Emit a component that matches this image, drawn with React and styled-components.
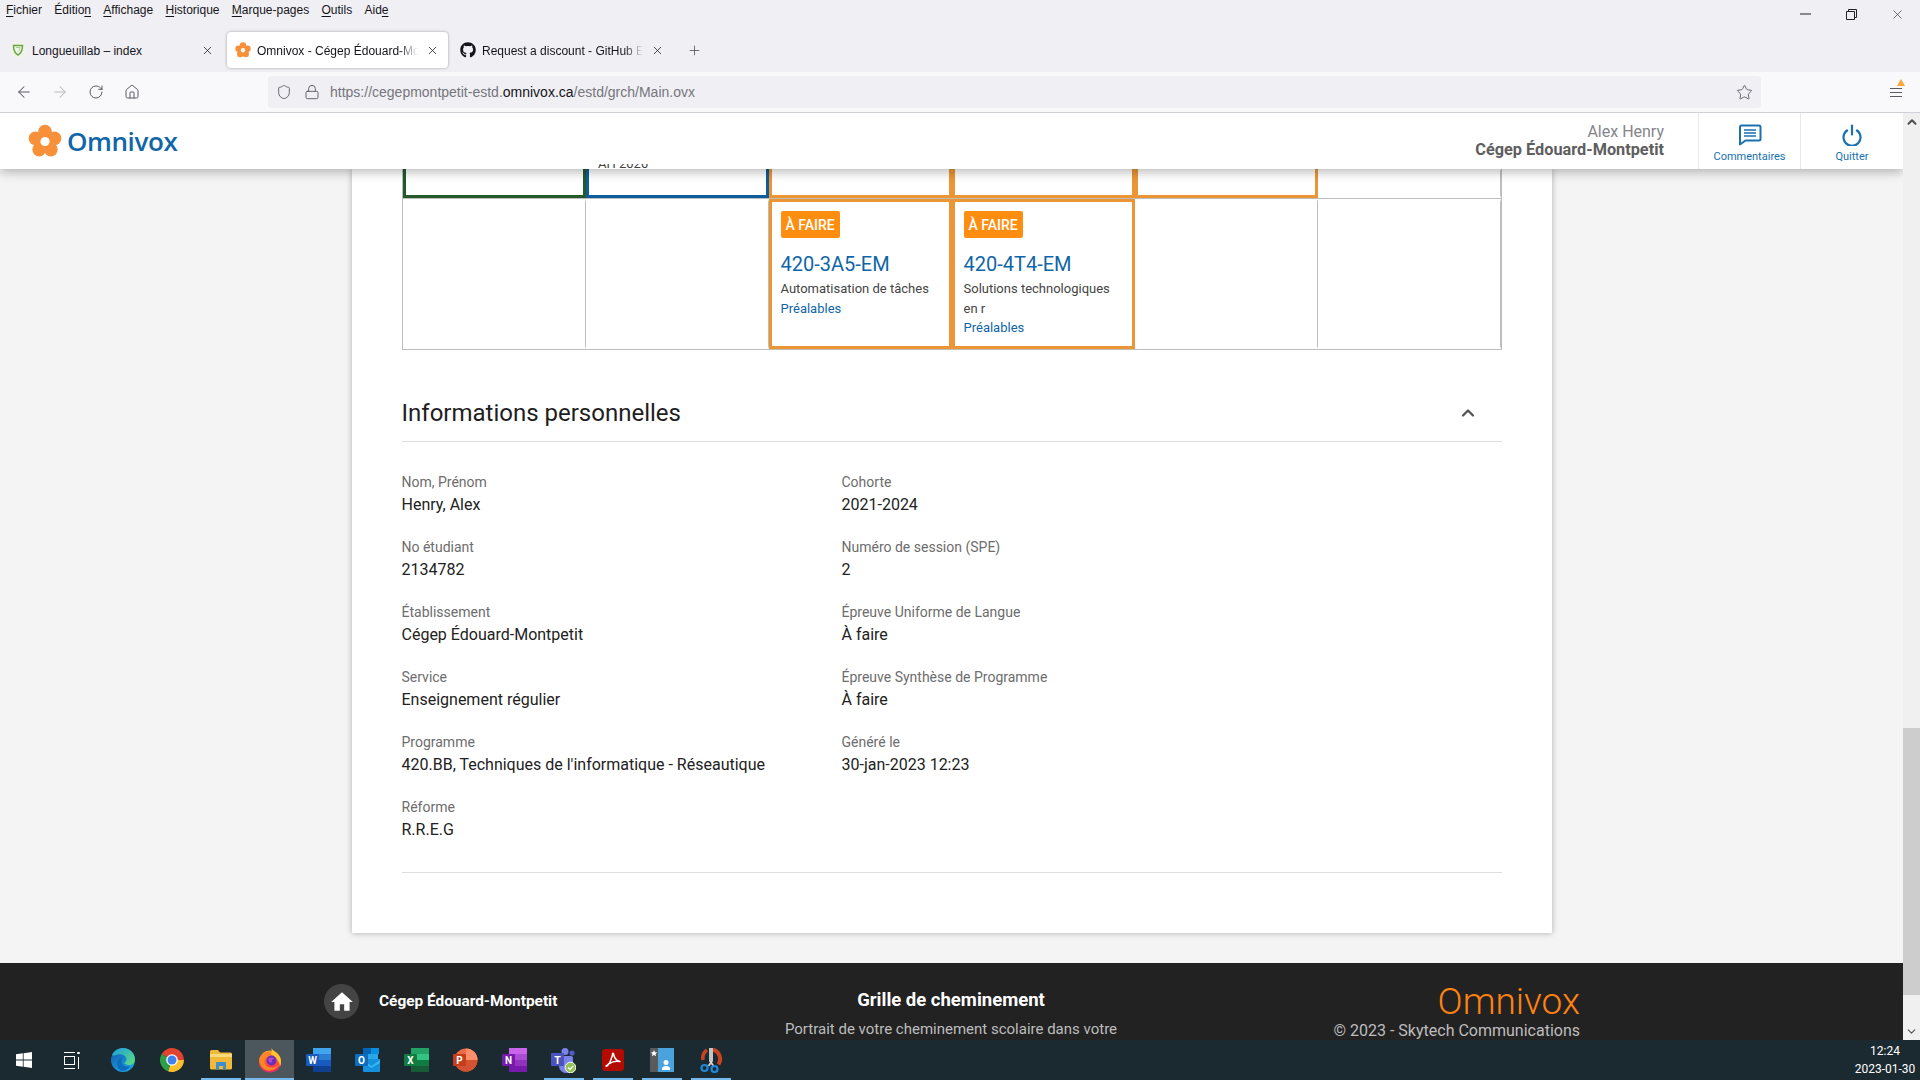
import React from "react";
import styled, { createGlobalStyle } from "styled-components";
import { ArrowLeft, ArrowRight, RotateCw, Home, Shield, Lock, Star, X, Plus, ChevronUp, ChevronDown } from "lucide-react";
import { FaGithub } from "react-icons/fa";

const Global = createGlobalStyle`
  html, body { margin: 0; padding: 0; height: 100%; background: #f4f4f4; }
  * { box-sizing: border-box; }
  body { font-family: Roboto, "Liberation Sans", sans-serif; }
`;

const Screen = styled.div`display: flex; flex-direction: column; width: 1920px; height: 1080px; overflow: hidden; position: relative;`;

/* browser chrome */
const TitleBar = styled.div`display: flex; justify-content: space-between; height: 32px; background: #f0f0f4; font: 12px/20px "Liberation Sans", sans-serif; color: #15141a;`;
const Menu = styled.nav`display: flex; gap: 12.3px; padding-left: 6px;`;
const MenuItem = styled.span`
  u { text-decoration-thickness: 1px; text-underline-offset: 2px; }
`;
const WindowControls = styled.div`display: flex; height: 28px;`;
const WinButton = styled.span`display: flex; align-items: center; justify-content: center; width: 46px; color: #222;`;

const TabStrip = styled.div`display: flex; height: 40px; background: #f0f0f4; padding-left: 2px; gap: 4px; align-items: flex-start;`;
const Tab = styled.div`
  display: flex; align-items: center; width: 221px; height: 36px; padding: 0 8px; gap: 6px;
  background: ${p => (p.$active ? "#fff" : "transparent")};
  border-radius: 4px;
  box-shadow: ${p => (p.$active ? "0 0 3px rgba(0,0,0,.35)" : "none")};
  font: 12px "Liberation Sans", sans-serif; color: #15141a;
`;
const TabIcon = styled.span`display: flex; width: 16px; height: 16px; flex: none;`;
const TabLabel = styled.span`
  flex: 1; min-width: 0; padding-top: 1px; white-space: nowrap; overflow: hidden;
  -webkit-mask-image: ${p => (p.$fade ? "linear-gradient(90deg,#000 88%,transparent)" : "none")};
  mask-image: ${p => (p.$fade ? "linear-gradient(90deg,#000 88%,transparent)" : "none")};
`;
const TabClose = styled.span`display: flex; width: 16px; justify-content: center; color: #15141a; flex: none;`;
const NewTab = styled.span`display: flex; align-items: center; justify-content: center; width: 34px; height: 36px; color: #555;`;

const Toolbar = styled.div`display: flex; align-items: center; height: 41px; padding: 0 6px; background: #f9f9fb; border-bottom: 1px solid #cfcfd8;`;
const NavButton = styled.span`display: flex; align-items: center; justify-content: center; width: 36px; height: 32px; color: ${p => (p.$off ? "#b9b9bd" : "#5b5b66")};`;
const UrlBar = styled.div`display: flex; align-items: center; width: 1493px; height: 32px; margin-left: 118px; padding: 0 8px; gap: 12px; border-radius: 4px; background: #f0f0f4; color: #5b5b66;`;
const UrlText = styled.span`flex: 1; margin-left: -2px; font: 14px "Liberation Sans", sans-serif; color: #75757c; b { font-weight: 400; color: #15141a; }`;
const Hamburger = styled.span`position: relative; display: flex; flex-direction: column; gap: 3px; width: 12px; margin-left: auto; margin-right: 12px; span { height: 1px; background: #5b5b66; }`;
const Notice = styled.i`position: absolute; top: -9px; right: -3px; width: 0; height: 0; border-left: 4px solid transparent; border-right: 4px solid transparent; border-bottom: 7px solid #ffa436;`;

/* page */
const Viewport = styled.div`flex: 1; display: flex; min-height: 0;`;
const PageArea = styled.div`flex: 1; min-width: 0; display: flex; flex-direction: column; background: #f4f4f4; overflow: hidden;`;
const PageHeader = styled.header`position: relative; z-index: 2; flex: none; display: flex; align-items: stretch; height: 56px; background: #fff; box-shadow: 0 3px 10px rgba(0,0,0,.28);`;
const Brand = styled.div`display: flex; align-items: center; gap: 5px; padding-left: 28px; margin-right: auto; font: 600 26px "Open Sans", sans-serif; letter-spacing: -.4px; color: #0f66a8;`;
const ClippedNote = styled.div`position: absolute; left: 598px; bottom: 0; height: 5px; overflow: hidden; display: flex; align-items: flex-end; font: 13px/14px Roboto, sans-serif; color: #444; span { margin-bottom: -2px; }`;
const UserBlock = styled.div`display: flex; flex-direction: column; justify-content: center; align-items: flex-end; padding: 0 34px 0 0; font-size: 16px; line-height: 18px; color: #85858a; strong { color: #5e5e60; font-weight: 700; font-size: 16.3px; }`;
const HeaderAction = styled.div`display: flex; flex-direction: column; align-items: center; justify-content: flex-start; padding-top: 11px; width: ${p => p.$w}px; border-left: 1px solid #e9e9e9; font-size: 11px; line-height: 13px; color: #1a70b0; svg { margin-bottom: 4px; }`;

const Card = styled.main`flex: none; width: 1200px; margin: 0 auto; padding: 0 50px 60px; background: #fff; box-shadow: 0 0 6px rgba(0,0,0,.3);`;
const Table = styled.div`display: flex; flex-direction: column; border: 1px solid #bdbdbd; border-top: 0;`;
const TableRow = styled.div`display: grid; grid-template-columns: repeat(6, 1fr); height: ${p => p.$h}px; border-bottom: ${p => (p.$line ? "1px solid #bdbdbd" : "0")};`;
const colours = { green: "#25592c", blue: "#0d5c9c", orange: "#eb9535" };
const Cell = styled.div`
  min-width: 0;
  border: 3px solid ${p => colours[p.$tone] || "transparent"};
  border-top-width: ${p => (p.$open ? 0 : 3)}px;
  border-right-color: ${p => colours[p.$tone] || "#bdbdbd"};
  border-right-width: ${p => (p.$tone ? 3 : 1)}px;
  padding: 9px 9px 0;
`;
const Badge = styled.span`display: inline-flex; align-items: center; height: 27px; padding: 0 5px; border-radius: 2px; background: #ff8d10; color: #fff; font-size: 14px; font-weight: 500;`;
const CourseCode = styled.div`margin-top: 12.500px; font-size: 20px; line-height: 26px; color: #0f66a8;`;
const CourseName = styled.div`margin-top: 2.500px; font-size: 13px; line-height: 19.500px; color: #444;`;
const CourseLink = styled.div`font-size: 13px; line-height: 20px; color: #0f66a8;`;

const SectionHead = styled.div`display: flex; align-items: center; justify-content: space-between; height: 48px; margin-top: 44px; padding: 0 24px 9.5px 0; border-bottom: 1px solid #dedede; font-size: 24px; color: #1e1e1e; svg { color: #555; }`;
const InfoGrid = styled.div`display: grid; grid-template-columns: 440px 1fr; padding: 30px 0; border-bottom: 1px solid #dedede;`;
const InfoCol = styled.div`display: flex; flex-direction: column; gap: 20px;`;
const InfoItem = styled.div`display: flex; flex-direction: column;`;
const InfoLabel = styled.span`font-size: 14px; line-height: 21px; color: #6d6d6d;`;
const InfoValue = styled.span`font-size: 16px; line-height: 24px; color: #222;`;

const Footer = styled.footer`flex: 1; display: grid; grid-template-columns: 427px 400px 429px; padding-left: 324px; margin-top: 30px; background: #222; color: #fff; overflow: hidden;`;
const FootLeft = styled.div`display: flex; align-items: flex-start; gap: 20px; padding-top: 21px;`;
const HomeDisc = styled.span`display: flex; align-items: center; justify-content: center; width: 35px; height: 35px; border-radius: 50%; background: #444;`;
const FootName = styled.span`line-height: 35px; font-size: 15.4px; font-weight: 700;`;
const FootCenter = styled.div`padding-top: 25px; text-align: center; display: flex; flex-direction: column; gap: 7px;`;
const FootTitle = styled.div`font-size: 18.5px; line-height: 24px; font-weight: 700;`;
const FootText = styled.div`font-size: 15px; line-height: 20px; color: #bdbdbd;`;
const FootRight = styled.div`padding-top: 19px; text-align: right;`;
const FootLogo = styled.div`font-size: 37px; line-height: 39px; font-weight: 300; color: #ff8212;`;
const FootCopy = styled.div`font-size: 16px; line-height: 20px; color: #bdbdbd;`;

const Scrollbar = styled.aside`flex: none; width: 17px; display: flex; flex-direction: column; background: #f0f0f0;`;
const ScrollBtn = styled.span`flex: none; display: flex; align-items: center; justify-content: center; height: 17px; color: #505050;`;
const ScrollTrack = styled.div`flex: 1; padding-top: 598px;`;
const ScrollThumb = styled.div`height: 267px; background: #cdcdcd;`;

/* taskbar */
const Taskbar = styled.div`flex: none; display: flex; align-items: stretch; height: 40px; background: #1b2a30; color: #fff;`;
const Slot = styled.div`
  position: relative; display: flex; align-items: center; justify-content: center;
  width: ${p => p.$w || 49}px; margin-left: ${p => p.$gap || 0}px;
  background: ${p => (p.$active ? "#4b575c" : "transparent")};
  &::after {
    content: ""; display: ${p => (p.$open ? "block" : "none")};
    position: absolute; bottom: 0; height: 2px; left: ${p => (p.$active ? 0 : 4.5)}px; right: ${p => (p.$active ? 0 : 4.5)}px;
    background: #76b9ed;
  }
`;
const Clock = styled.div`margin-left: auto; display: flex; flex-direction: column; align-items: center; justify-content: center; width: 70px; gap: 5px; font: 12px/13px Roboto, sans-serif;`;

/* icons */
const Flower = ({ size = 34, colour = "#f8903a" }) => {
  const petals = [0, 72, 144, 216, 288].map(a => {
    const r = (a - 90) * Math.PI / 180;
    return [17 + 10 * Math.cos(r), 17.5 + 10 * Math.sin(r)];
  });
  return (
    <svg width={size} height={size} viewBox="0 0 34 34">
      {petals.map(([x, y], i) => <circle key={i} cx={x} cy={y} r="6.8" fill={colour} />)}
      <circle cx="17" cy="17.5" r="7" fill={colour} />
      <circle cx="17" cy="17.5" r="4.6" fill="#fff" />
    </svg>
  );
};
const TabShield = () => (
  <svg width="16" height="16" viewBox="0 0 16 16">
    <circle cx="8" cy="8" r="8" fill="#eef5e6" />
    <path d="M3.5 3.5h9c0 4-.8 7.5-4.5 9.5C4.300 11 3.500 7.500 3.500 3.500z" fill="none" stroke="#6ba34a" strokeWidth="1.500" />
    <path d="M6 5.500h4l-1 3.500" fill="none" stroke="#a9cf8e" strokeWidth="1" />
  </svg>
);
const Bubble = () => (
  <svg width="24" height="22" viewBox="0 0 24 22" fill="none" stroke="#1a70b0" strokeWidth="2">
    <path d="M3 1.500h18a1.500 1.500 0 0 1 1.500 1.500v12a1.500 1.500 0 0 1-1.500 1.500H7.500L2 20.500V3A1.500 1.500 0 0 1 3 1.500z" strokeLinejoin="round" />
    <path d="M6 6h12M6 9h12M6 12h12" strokeWidth="1.600" />
  </svg>
);
const PowerIcon = () => (
  <svg width="22" height="22" viewBox="0 0 22 22" fill="none" stroke="#1a70b0" strokeWidth="2.200" strokeLinecap="round">
    <path d="M6 6.500a8.500 8.500 0 1 0 10 0" />
    <path d="M11 1.500v9" />
  </svg>
);
const MaxIcon = () => (
  <svg width="11" height="11" viewBox="0 0 11 11" fill="none" stroke="#222">
    <path d="M.5 2.500h8v8h-8zM2.500 2.500v-2h8v8h-2" />
  </svg>
);
const HouseIcon = () => (
  <svg width="26" height="26" viewBox="0 0 24 24" fill="#fff">
    <path d="M10 20v-6h4v6h5v-8h3L12 3 2 12h3v8z" />
  </svg>
);
const WinLogo = () => (
  <svg width="16" height="16" viewBox="0 0 16 16" fill="#fff">
    <path d="M0 2.300 6.800 1.300v6.300H0zM7.600 1.200 16 0v7.600H7.600zM0 8.400h6.800v6.300L0 13.700zM7.600 8.400H16V16l-8.400-1.200z" />
  </svg>
);
const TaskView = () => (
  <svg width="17" height="17" viewBox="0 0 17 17" fill="none" stroke="#fff">
    <path d="M1 .5h11M1 16.500h11" />
    <rect x="1.500" y="4.500" width="10" height="8" />
    <path d="M15.500 0v2" strokeWidth="2.500" />
    <path d="M15.500 5v12" />
  </svg>
);
const Edge = () => (
  <svg width="24" height="24" viewBox="0 0 24 24">
    <defs>
      <linearGradient id="eb" x1="0" y1="0" x2="0.6" y2="1"><stop offset="0" stopColor="#0c59a4" /><stop offset="1" stopColor="#1fa0e4" /></linearGradient>
      <linearGradient id="eg" x1="0" y1="0" x2="1" y2="1"><stop offset="0" stopColor="#1b9de2" /><stop offset="1" stopColor="#5fe07a" /></linearGradient>
    </defs>
    <circle cx="12" cy="12" r="12" fill="url(#eb)" />
    <path d="M1 7C3 2.500 7.500 0 12 0c7 0 12 5.500 12 11.500 0 3.500-3 5.500-6 5.500-2 0-4-.8-5-2 2-1 3-2.800 2.500-4.500C14.500 7 10 5.500 6.500 6.500 4 7.200 2 8 1 7z" fill="url(#eg)" />
    <path d="M9 22c-3-2-3.500-6-2.500-9 1-2.200 3.500-3.500 5.500-3-1.800 2-2.500 5 0 7 1.800 1.500 5 2 7.500 1-2 3-6 6.500-10.500 4z" fill="#0f6cbd" />
  </svg>
);
const wedge = (a, b, r = 12) => {
  const p = d => { const t = (d - 90) * Math.PI / 180; return `${12 + r * Math.cos(t)} ${12 + r * Math.sin(t)}`; };
  return `M12 12L${p(a)}A${r} ${r} 0 ${b - a > 180 ? 1 : 0} 1 ${p(b)}Z`;
};
const Chrome = () => (
  <svg width="24" height="24" viewBox="0 0 24 24">
    <path d={wedge(-60, 90)} fill="#e2432f" />
    <path d={wedge(90, 200)} fill="#fbc02d" />
    <path d={wedge(200, 300)} fill="#2f9e48" />
    <circle cx="12" cy="12" r="5.800" fill="#fff" />
    <circle cx="12" cy="12" r="4.500" fill="#3f82ef" />
  </svg>
);
const Folder = () => (
  <svg width="22" height="20" viewBox="0 0 22 20">
    <path d="M0 1.500A1.500 1.500 0 0 1 1.500 0H8l2 2.500h10.500A1.500 1.500 0 0 1 22 4v14a1.500 1.500 0 0 1-1.500 1.500h-19A1.500 1.500 0 0 1 0 18z" fill="#f0b93a" />
    <path d="M0 4h22v3H0z" fill="#f8da7c" />
    <path d="M7 12h8a1 1 0 0 1 1 1v6.500h-3V16H9v3.500H6V13a1 1 0 0 1 1-1z" fill="#3f8fcf" />
  </svg>
);
const Firefox = () => (
  <svg width="24" height="26" viewBox="0 0 24 26">
    <defs>
      <linearGradient id="ff" x1="0.5" y1="0" x2="0.5" y2="1"><stop offset="0" stopColor="#ff9a2a" /><stop offset=".6" stopColor="#ff4a3a" /><stop offset="1" stopColor="#e8266e" /></linearGradient>
    </defs>
    <circle cx="12" cy="14.500" r="11" fill="url(#ff)" />
    <path d="M13 0c.5 3 5 4.500 8 8.500 2.500 3.500 2.500 8 1 11-.5-5-4-10-9-12 1-2.500 1-5 0-7.500z" fill="#ffc42e" />
    <path d="M1.500 11C4 7 9 6.500 12 8c-3.500.5-5.500 3-5.500 6s2.500 6 6.500 6.500c3 .3 6-1 8-3.500-2 5-7 7.500-11.500 6.500C5 22.500.5 17 1.500 11z" fill="#ff8a22" opacity=".95" />
    <circle cx="13.500" cy="13.500" r="5" fill="#6b2fb5" />
    <path d="M10.500 11.500c2-1.500 5-1 6 .5-1.500-.3-2.500 0-3 1 .8.500 1 1.500 0 2.500-1.500.500-3-.800-3-2.500z" fill="#b14ad0" />
  </svg>
);
const Office = ({ letter, left, shades, circle }) => (
  <svg width="25" height="24" viewBox="0 0 25 24">
    {circle ? (
      <>
        <circle cx="13" cy="12" r="11.500" fill={shades[1]} />
        <path d="M13 12V.5a11.500 11.500 0 0 1 11.500 11.500z" fill={shades[0]} />
        <path d="M13 12h11.500a11.500 11.500 0 0 1-21 6.500z" fill={shades[2]} />
      </>
    ) : (
      <>
        <rect x="7" y="0" width="18" height="6" fill={shades[0]} />
        <rect x="7" y="6" width="18" height="6" fill={shades[1]} />
        <rect x="7" y="12" width="18" height="6" fill={shades[2]} />
        <rect x="7" y="18" width="18" height="6" fill={shades[3]} />
      </>
    )}
    <rect x="0" y="6" width="13" height="12" rx="1" fill={left} />
    <text x="6.500" y="15.500" textAnchor="middle" fontFamily="Roboto, sans-serif" fontWeight="700" fontSize="10" fill="#fff">{letter}</text>
  </svg>
);
const Outlook = () => (
  <svg width="25" height="24" viewBox="0 0 25 24">
    <rect x="8" y="0" width="15" height="12" fill="#28a8ea" />
    <rect x="8" y="0" width="8" height="6" fill="#0364b8" />
    <rect x="16" y="0" width="8" height="6" fill="#0a8fdc" />
    <path d="M8 11h17v12a1 1 0 0 1-1 1H9a1 1 0 0 1-1-1z" fill="#1490df" />
    <path d="M8 12l8.500 6L25 12v3l-8.500 5L8 15z" fill="#50d9ff" opacity=".55" />
    <rect x="0" y="6" width="13" height="12" rx="1" fill="#0f6cbd" />
    <text x="6.500" y="15.500" textAnchor="middle" fontFamily="Roboto, sans-serif" fontWeight="700" fontSize="10" fill="#fff">O</text>
  </svg>
);
const Teams = () => (
  <svg width="25" height="25" viewBox="0 0 25 25">
    <circle cx="14" cy="3.500" r="3.500" fill="#7b83eb" />
    <circle cx="21" cy="5" r="2.600" fill="#5059c9" />
    <path d="M8 8h12a2 2 0 0 1 2 2v8a7 7 0 0 1-14 0z" fill="#7b83eb" />
    <rect x="0" y="5" width="13" height="13" rx="1" fill="#4b53bc" />
    <text x="6.500" y="15.500" textAnchor="middle" fontFamily="Roboto, sans-serif" fontWeight="700" fontSize="10.500" fill="#fff">T</text>
    <circle cx="19.500" cy="19.500" r="5.300" fill="#92c353" stroke="#fff" strokeWidth="1" />
    <path d="M17 19.500l2 2 3.300-3.600" fill="none" stroke="#fff" strokeWidth="1.300" />
  </svg>
);
const Acrobat = () => (
  <svg width="22" height="22" viewBox="0 0 22 22">
    <rect width="22" height="22" rx="3" fill="#b30b00" />
    <path d="M4 17c2 1 4.500-4 6.500-11-.3-2 .8-2.500 1.200-.6C12 8 14 12 18 12.600c-3-.9-8 .2-11 2C6 15.500 5 16.500 4 17z" fill="none" stroke="#fff" strokeWidth="1.500" strokeLinejoin="round" />
  </svg>
);
const IdCard = () => (
  <svg width="24" height="24" viewBox="0 0 24 24">
    <rect width="8" height="24" fill="#585a5c" />
    <rect x="8" width="16" height="24" fill="#4aa3dc" />
    <path d="M4 2l1 2.200 2.300.2-1.800 1.500.6 2.300L4 7l-2.100 1.200.6-2.300L.7 4.400 3 4.200z" fill="#fff" />
    <circle cx="16" cy="14.500" r="2.500" fill="#fff" />
    <path d="M12 22v-1.500c0-1.500 1.500-2.500 4-2.500s4 1 4 2.500V22z" fill="#fff" />
  </svg>
);
const Snip = () => (
  <svg width="24" height="25" viewBox="0 0 24 25">
    <path d="M14 1.500a10 10 0 0 1 5.500 15" fill="none" stroke="#c8431f" strokeWidth="4" />
    <path d="M8 2A10 10 0 0 0 4 12" fill="none" stroke="#c8431f" strokeWidth="3.500" />
    <path d="M13 0v13l-3.500 5M11 0v13l3.500 5" fill="none" stroke="#d5d5d5" strokeWidth="1.800" />
    <circle cx="5.500" cy="20" r="3" fill="none" stroke="#1e88d8" strokeWidth="2.200" />
    <circle cx="15.500" cy="21" r="3" fill="none" stroke="#1e88d8" strokeWidth="2.200" />
  </svg>
);

const left = [
  ["Nom, Prénom", "Henry, Alex"],
  ["No étudiant", "2134782"],
  ["Établissement", "Cégep Édouard-Montpetit"],
  ["Service", "Enseignement régulier"],
  ["Programme", "420.BB, Techniques de l'informatique - Réseautique"],
  ["Réforme", "R.R.E.G"],
];
const right = [
  ["Cohorte", "2021-2024"],
  ["Numéro de session (SPE)", "2"],
  ["Épreuve Uniforme de Langue", "À faire"],
  ["Épreuve Synthèse de Programme", "À faire"],
  ["Généré le", "30-jan-2023 12:23"],
];
const menus = [
  [<u key="u">F</u>, "ichier"],
  ["Éditio", <u key="u">n</u>],
  [<u key="u">A</u>, "ffichage"],
  [<u key="u">H</u>, "istorique"],
  [<u key="u">M</u>, "arque-pages"],
  [<u key="u">O</u>, "utils"],
  ["Aid", <u key="u">e</u>],
];

export default function App() {
  return (
    <Screen>
      <Global />
      <TitleBar>
        <Menu>{menus.map((m, i) => <MenuItem key={i}>{m}</MenuItem>)}</Menu>
        <WindowControls>
          <WinButton><svg width="11" height="2" viewBox="0 0 11 2"><path d="M0 1h11" stroke="#222" /></svg></WinButton>
          <WinButton><MaxIcon /></WinButton>
          <WinButton><X size={15} strokeWidth={1} /></WinButton>
        </WindowControls>
      </TitleBar>
      <TabStrip>
        <Tab>
          <TabIcon><TabShield /></TabIcon>
          <TabLabel>Longueuillab – index</TabLabel>
          <TabClose><X size={13} strokeWidth={1.4} /></TabClose>
        </Tab>
        <Tab $active>
          <TabIcon><Flower size={16} /></TabIcon>
          <TabLabel $fade>Omnivox - Cégep Édouard-Montpetit</TabLabel>
          <TabClose><X size={13} strokeWidth={1.4} /></TabClose>
        </Tab>
        <Tab>
          <TabIcon><FaGithub size={16} color="#15141a" /></TabIcon>
          <TabLabel $fade>Request a discount - GitHub Edu</TabLabel>
          <TabClose><X size={13} strokeWidth={1.4} /></TabClose>
        </Tab>
        <NewTab><Plus size={15} strokeWidth={1.3} /></NewTab>
      </TabStrip>
      <Toolbar>
        <NavButton><ArrowLeft size={18} strokeWidth={1.4} /></NavButton>
        <NavButton $off><ArrowRight size={18} strokeWidth={1.4} /></NavButton>
        <NavButton><RotateCw size={16} strokeWidth={1.5} /></NavButton>
        <NavButton><Home size={16} strokeWidth={1.5} /></NavButton>
        <UrlBar>
          <Shield size={16} strokeWidth={1.4} />
          <Lock size={16} strokeWidth={1.4} />
          <UrlText>https://cegepmontpetit-estd.<b>omnivox.ca</b>/estd/grch/Main.ovx</UrlText>
          <Star size={17} strokeWidth={1.3} />
        </UrlBar>
        <Hamburger><Notice /><span /><span /><span /></Hamburger>
      </Toolbar>

      <Viewport>
        <PageArea>
          <PageHeader>
            <Brand><Flower size={34} />Omnivox</Brand>
            <ClippedNote><span>AH 2020</span></ClippedNote>
            <UserBlock>Alex Henry<strong>Cégep Édouard-Montpetit</strong></UserBlock>
            <HeaderAction $w={102}><Bubble />Commentaires</HeaderAction>
            <HeaderAction $w={103}><PowerIcon />Quitter</HeaderAction>
          </PageHeader>
          <Card>
            <Table>
              <TableRow $h={30} $line>
                <Cell $tone="green" $open />
                <Cell $tone="blue" $open />
                <Cell $tone="orange" $open />
                <Cell $tone="orange" $open />
                <Cell $tone="orange" $open />
                <Cell />
              </TableRow>
              <TableRow $h={150}>
                <Cell />
                <Cell />
                <Cell $tone="orange">
                  <Badge>À FAIRE</Badge>
                  <CourseCode>420-3A5-EM</CourseCode>
                  <CourseName>Automatisation de tâches</CourseName>
                  <CourseLink>Préalables</CourseLink>
                </Cell>
                <Cell $tone="orange">
                  <Badge>À FAIRE</Badge>
                  <CourseCode>420-4T4-EM</CourseCode>
                  <CourseName>Solutions technologiques en r</CourseName>
                  <CourseLink>Préalables</CourseLink>
                </Cell>
                <Cell />
                <Cell />
              </TableRow>
            </Table>
            <SectionHead>
              Informations personnelles
              <ChevronUp size={20} strokeWidth={2.8} />
            </SectionHead>
            <InfoGrid>
              {[left, right].map((col, c) => (
                <InfoCol key={c}>
                  {col.map(([k, v]) => (
                    <InfoItem key={k}>
                      <InfoLabel>{k}</InfoLabel>
                      <InfoValue>{v}</InfoValue>
                    </InfoItem>
                  ))}
                </InfoCol>
              ))}
            </InfoGrid>
          </Card>
          <Footer>
            <FootLeft>
              <HomeDisc><HouseIcon /></HomeDisc>
              <FootName>Cégep Édouard-Montpetit</FootName>
            </FootLeft>
            <FootCenter>
              <FootTitle>Grille de cheminement</FootTitle>
              <FootText>Portrait de votre cheminement scolaire dans votre</FootText>
            </FootCenter>
            <FootRight>
              <FootLogo>Omnivox</FootLogo>
              <FootCopy>© 2023 - Skytech Communications</FootCopy>
            </FootRight>
          </Footer>
        </PageArea>
        <Scrollbar>
          <ScrollBtn><ChevronUp size={14} strokeWidth={3.5} /></ScrollBtn>
          <ScrollTrack><ScrollThumb /></ScrollTrack>
          <ScrollBtn><ChevronDown size={13} strokeWidth={2} /></ScrollBtn>
        </Scrollbar>
      </Viewport>

      <Taskbar>
        <Slot $w={48}><WinLogo /></Slot>
        <Slot $w={46}><TaskView /></Slot>
        <Slot $gap={4}><Edge /></Slot>
        <Slot><Chrome /></Slot>
        <Slot $open><Folder /></Slot>
        <Slot $open $active><Firefox /></Slot>
        <Slot><Office letter="W" left="#185abd" shades={["#41a5ee", "#2b7cd3", "#185abd", "#103f91"]} /></Slot>
        <Slot><Outlook /></Slot>
        <Slot><Office letter="X" left="#107c41" shades={["#21a366", "#33c481", "#107c41", "#185c37"]} /></Slot>
        <Slot><Office letter="P" left="#c43e1c" shades={["#ff8f6b", "#ed6c47", "#d35230"]} circle /></Slot>
        <Slot><Office letter="N" left="#7719aa" shades={["#ca64ea", "#ae4bd5", "#9332bf", "#7719aa"]} /></Slot>
        <Slot $open><Teams /></Slot>
        <Slot $open><Acrobat /></Slot>
        <Slot $open><IdCard /></Slot>
        <Slot $open><Snip /></Slot>
        <Clock><span>12:24</span><span>2023-01-30</span></Clock>
      </Taskbar>
    </Screen>
  );
}
